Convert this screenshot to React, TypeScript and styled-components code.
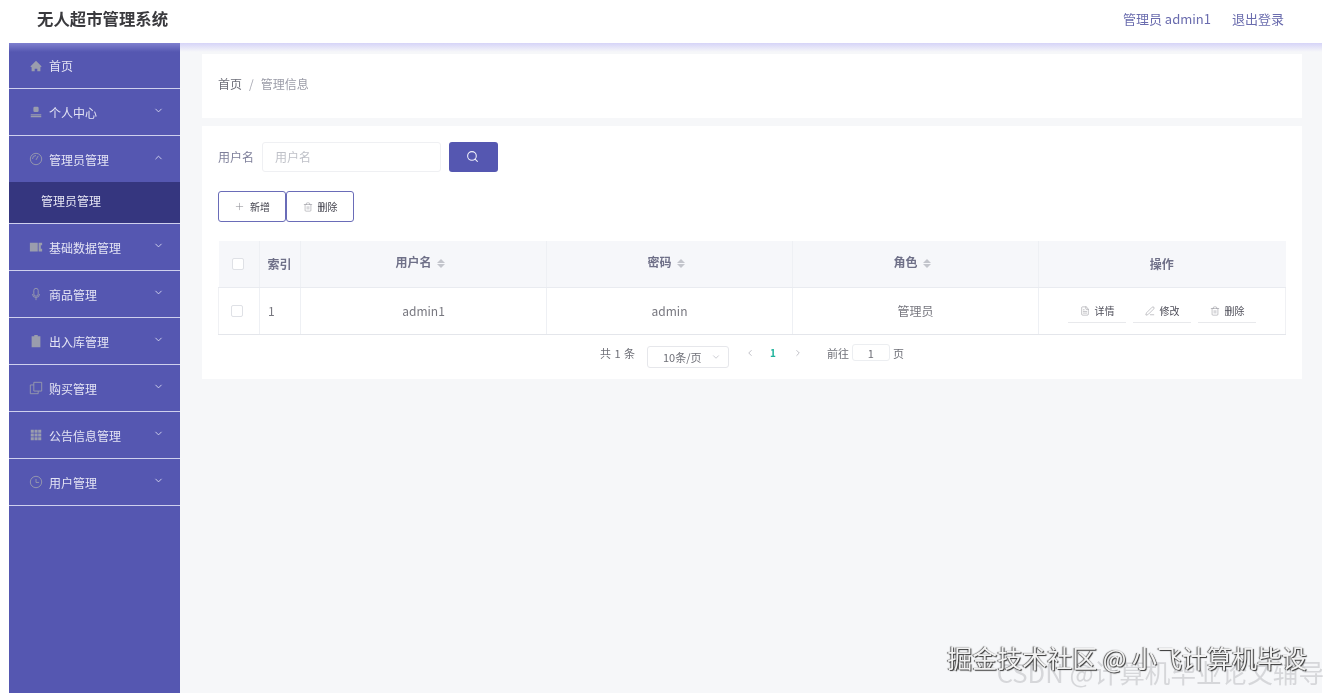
import React from 'react'
import styled, { createGlobalStyle } from 'styled-components'
import { ChevronDown, ChevronUp, ChevronLeft, ChevronRight, Search, Plus, Trash2, PenLine, FileText } from 'lucide-react'

const FONT = `"Noto Sans CJK SC", "Noto Sans", sans-serif`

const GlobalStyle = createGlobalStyle`
  html, body {
    margin: 0;
    padding: 0;
    background: #fff;
    font-family: ${FONT};
    overflow: hidden;
  }
  * {
    box-sizing: border-box;
  }
`

const Page = styled.div`
  position: relative;
  width: 1327px;
  height: 693px;
  overflow: hidden;
  padding: 0 5px 0 9px;
  display: flex;
  flex-direction: column;
  background: #fff;
  filter: blur(0.35px);
`

const Header = styled.header`
  height: 43px;
  flex: none;
  display: flex;
  align-items: center;
  justify-content: space-between;
  padding: 0 38px 7px 28px;
`

const Title = styled.div`
  font-size: 16.4px;
  font-weight: 700;
  color: #3a3a3e;
`

const UserLinks = styled.div`
  display: flex;
  gap: 21px;
  font-size: 13px;
  color: #6a6cae;
`

const Body = styled.div`
  flex: 1;
  display: flex;
  min-height: 0;
`

const Sidebar = styled.nav`
  width: 171px;
  flex: none;
  background: linear-gradient(#7f80cf 0, #5557b1 9px);
  background-color: #5557b1;
`

const MenuRow = styled.div<{ $first?: boolean; $open?: boolean }>`
  height: ${({ $first, $open }) => ($first || $open ? 46 : 47)}px;
  display: flex;
  align-items: center;
  padding: 0 16px 0 20px;
  border-bottom: ${({ $open }) => ($open ? '0' : '1px solid #cfd0ee')};
  font-size: 12px;
  color: #e4e4f4;
`

const MenuIcon = styled.svg`
  width: 14px;
  height: 14px;
  flex: none;
  margin-right: 6px;
  color: #9a9dad;
`

const MenuLabel = styled.span`
  flex: 1;
`

const Chevron = styled.span`
  display: flex;
  margin: -4px 0 0;
  color: #d5d6ef;
`

const SubRow = styled.div`
  height: 42px;
  display: flex;
  align-items: center;
  padding: 0 0 4px 32px;
  background: #35367f;
  border-bottom: 1px solid #cfd0ee;
  font-size: 12px;
  color: #e6e6f4;
`

const Main = styled.main`
  flex: 1;
  min-width: 0;
  padding: 11px 20px 0 22px;
  display: flex;
  flex-direction: column;
  gap: 8px;
  background: linear-gradient(#d6d4f8 0, #f6f7f9 9px);
  background-color: #f6f7f9;
`

const Card = styled.section`
  background: #fff;
`

const Crumbs = styled(Card)`
  height: 64px;
  display: flex;
  align-items: center;
  padding: 0 16px 5px;
  font-size: 12px;
  color: #9b9ca8;
`

const CrumbHome = styled.span`
  color: #6d6e78;
`

const CrumbSep = styled.span`
  margin: 0 7px;
  color: #a8a9b3;
`

const ListCard = styled(Card)`
  height: 253px;
  padding: 16px 16px 0;
`

const SearchRow = styled.div`
  display: flex;
  align-items: center;
`

const FieldLabel = styled.label`
  width: 44px;
  padding-bottom: 2px;
  font-size: 12px;
  color: #7e7f9a;
`

const TextInput = styled.div`
  width: 179px;
  height: 30px;
  display: flex;
  align-items: center;
  padding: 0 0 2px 12px;
  border: 1px solid #eff0f3;
  border-radius: 3px;
  font-size: 12px;
  color: #bfc1c8;
`

const SearchButton = styled.button`
  width: 49px;
  height: 30px;
  margin-left: 8px;
  padding: 0 3px 2px 0;
  display: flex;
  align-items: center;
  justify-content: center;
  border: 0;
  border-radius: 3px;
  background: #5557b1;
  color: #f0f0fa;
`

const ActionRow = styled.div`
  display: flex;
  margin-top: 19px;
`

const OutlineButton = styled.button`
  width: 68px;
  height: 31px;
  padding: 0;
  display: flex;
  align-items: center;
  justify-content: center;
  gap: 5px;
  border: 1px solid #6a6cb8;
  border-radius: 3px;
  background: #fff;
  font-family: ${FONT};
  font-size: 10px;
  color: #3f3f4a;

  svg {
    color: #8b8b92;
  }
`

const Table = styled.table`
  width: 1068px;
  margin-top: 19px;
  border-collapse: collapse;
  table-layout: fixed;
  font-size: 12px;
`

const HeadCell = styled.th<{ $w?: number; $sortable?: boolean }>`
  width: ${({ $w }) => ($w ? `${$w}px` : 'auto')};
  height: 46px;
  padding: ${({ $sortable }) => ($sortable ? '0 7px 4px 0' : '0 1px 1px 0')};
  background: #f6f7fa;
  border-right: 1px solid #eef0f4;
  border-bottom: 1px solid #e9ebf0;
  font-weight: 700;
  font-size: 12px;
  color: #6f7088;
  text-align: center;

  &:last-child {
    border-right: 0;
  }
`

const Cell = styled.td`
  height: 47px;
  padding: 0 0 1px;
  border-right: 1px solid #eef0f4;
  border-bottom: 1px solid #e4e6eb;
  text-align: center;
  color: #77777f;

  &:first-child {
    border-left: 1px solid #f0f1f4;
  }

  &:last-child {
    border-right: 1px solid #f0f1f4;
  }
`

const IndexCell = styled(Cell)`
  text-align: left;
  padding-left: 8px;
`

const Check = styled.span<{ $row?: boolean }>`
  display: inline-block;
  width: 12px;
  height: 12px;
  margin: ${({ $row }) => ($row ? '-2px 5px 0 0' : '-2px 1px 0 0')};
  vertical-align: middle;
  border: 1px solid #dfe1e6;
  border-radius: 2px;
  background: #fff;
`

const Sort = styled.span`
  display: inline-flex;
  flex-direction: column;
  gap: 1px;
  margin-left: 5px;
  vertical-align: middle;

  &::before,
  &::after {
    content: '';
    width: 0;
    height: 0;
    border-left: 4px solid transparent;
    border-right: 4px solid transparent;
  }

  &::before {
    border-bottom: 4px solid #c3c5cc;
  }

  &::after {
    border-top: 4px solid #c3c5cc;
  }
`

const RowActions = styled.div`
  display: flex;
  justify-content: center;
  gap: 7px;
  padding-top: 2px;
`

const RowAction = styled.span`
  width: 58px;
  height: 24px;
  display: flex;
  align-items: center;
  justify-content: center;
  gap: 5px;
  border-bottom: 1px solid #e8e9ec;
  font-size: 10px;
  color: #4f4f5a;

  svg {
    color: #8a8a92;
  }
`

const Pager = styled.div`
  display: flex;
  align-items: center;
  height: 36px;
  padding-left: 382px;
  font-size: 11px;
  color: #6f7078;
`

const Total = styled.span`
  width: 34px;
  white-space: nowrap;
  word-spacing: 1px;
`

const PageSize = styled.div`
  width: 82px;
  height: 22px;
  margin: 8px 16px 0 13px;
  padding: 0 7px 0 15px;
  display: flex;
  align-items: center;
  justify-content: space-between;
  border: 1px solid #e6e7eb;
  border-radius: 3px;
`

const PageNumber = styled.span`
  margin: 0 17px 0 15px;
  font-weight: 700;
  font-size: 10px;
  color: #1fb39c;
`

const Arrow = styled.span`
  display: flex;
  color: #b4b5bd;
`

const Goto = styled.span`
  margin-left: 24px;
`

const GotoBox = styled.span`
  width: 38px;
  height: 17px;
  margin: 0 3px 0 3px;
  display: flex;
  align-items: center;
  justify-content: center;
  border: 1px solid #eceef1;
  border-radius: 3px;
  font-size: 11px;
`

const Watermark = styled.div`
  position: absolute;
  right: 20px;
  bottom: 23px;
  font-size: 25px;
  line-height: 1;
  color: #f2f2f2;
  white-space: nowrap;
  text-shadow: 1px 1px 1px #333, -1px 0 1px #555;
`

const WatermarkBack = styled.div`
  position: absolute;
  right: 3px;
  bottom: 8px;
  font-size: 25.6px;
  line-height: 1;
  color: #d6d7da;
  white-space: nowrap;
`

type IconProps = { d: string; fill?: boolean }

const Glyph: React.FC<IconProps> = ({ d, fill }) => (
  <MenuIcon
    viewBox='0 0 16 16'
    fill={fill ? 'currentColor' : 'none'}
    stroke={fill ? 'none' : 'currentColor'}
    strokeWidth={1}
  >
    <path d={d} />
  </MenuIcon>
)

const menu: { label: string; d: string; fill?: boolean; open?: boolean; plain?: boolean }[] = [
  { label: '首页', d: 'M8 2L1.5 8.5 3 9.5V14h3.5v-3h3v3H13V9.5l1.5-1z', fill: true, plain: true },
  { label: '个人中心', d: 'M6.5 2h3A1.5 1.5 0 0 1 11 3.5v3A1.5 1.5 0 0 1 9.5 8h-3A1.5 1.5 0 0 1 5 6.5v-3A1.5 1.5 0 0 1 6.5 2zM2 10.5h12V12H2zM2 12.5h12V14H2z', fill: true },
  {
    label: '管理员管理',
    d: 'M8 1.5a6.5 6.5 0 1 1 0 13 6.5 6.5 0 0 1 0-13zM8 9l2.5-4.5M4 8a4 4 0 0 1 4-4',
    open: true,
  },
  { label: '基础数据管理', d: 'M1 3h9v10H1zM11 3h4v3h-1.5v4H15v3h-4z', fill: true },
  { label: '商品管理', d: 'M8 1.5a2.5 2.5 0 0 1 2.5 2.5v4a2.5 2.5 0 0 1-5 0V4A2.5 2.5 0 0 1 8 1.5zM4 8a4 4 0 0 0 8 0M8 12v3' },
  { label: '出入库管理', d: 'M6 1h4v1.5h3V15H3V2.5h3z', fill: true },
  { label: '购买管理', d: 'M5.5 1.5h9v10h-9zM5.5 4.5h-4v10h9v-3' },
  { label: '公告信息管理', d: 'M2 2h3.5v3.5H2zM6.3 2h3.5v3.5H6.3zM10.5 2H14v3.5h-3.5zM2 6.3h3.5v3.5H2zM6.3 6.3h3.5v3.5H6.3zM10.5 6.3H14v3.5h-3.5zM2 10.5h3.5V14H2zM6.3 10.5h3.5V14H6.3zM10.5 10.5H14V14h-3.5z', fill: true },
  { label: '用户管理', d: 'M8 1.5a6.5 6.5 0 1 1 0 13 6.5 6.5 0 0 1 0-13zM8 4.5V8.5h3.5' },
]

const App: React.FC = () => (
  <Page>
    <GlobalStyle />
    <Header>
      <Title>无人超市管理系统</Title>
      <UserLinks>
        <span>管理员 admin1</span>
        <span>退出登录</span>
      </UserLinks>
    </Header>
    <Body>
      <Sidebar>
        {menu.map((item, i) => (
          <React.Fragment key={item.label}>
            <MenuRow $first={i === 0} $open={item.open}>
              <Glyph d={item.d} fill={item.fill} />
              <MenuLabel>{item.label}</MenuLabel>
              {!item.plain && (
                <Chevron>{item.open ? <ChevronUp size={11} /> : <ChevronDown size={11} />}</Chevron>
              )}
            </MenuRow>
            {item.open && <SubRow>管理员管理</SubRow>}
          </React.Fragment>
        ))}
      </Sidebar>
      <Main>
        <Crumbs>
          <CrumbHome>首页</CrumbHome>
          <CrumbSep>/</CrumbSep>
          管理信息
        </Crumbs>
        <ListCard>
          <SearchRow>
            <FieldLabel>用户名</FieldLabel>
            <TextInput>用户名</TextInput>
            <SearchButton aria-label='搜索'>
              <Search size={13} />
            </SearchButton>
          </SearchRow>
          <ActionRow>
            <OutlineButton>
              <Plus size={11} strokeWidth={1.2} />
              新增
            </OutlineButton>
            <OutlineButton>
              <Trash2 size={10} strokeWidth={1.2} />
              删除
            </OutlineButton>
          </ActionRow>
          <Table>
            <thead>
              <tr>
                <HeadCell $w={41}>
                  <Check />
                </HeadCell>
                <HeadCell $w={41}>索引</HeadCell>
                <HeadCell $w={246} $sortable>
                  用户名
                  <Sort />
                </HeadCell>
                <HeadCell $w={246} $sortable>
                  密码
                  <Sort />
                </HeadCell>
                <HeadCell $w={246} $sortable>
                  角色
                  <Sort />
                </HeadCell>
                <HeadCell>操作</HeadCell>
              </tr>
            </thead>
            <tbody>
              <tr>
                <Cell>
                  <Check $row />
                </Cell>
                <IndexCell>1</IndexCell>
                <Cell>admin1</Cell>
                <Cell>admin</Cell>
                <Cell>管理员</Cell>
                <Cell>
                  <RowActions>
                    <RowAction>
                      <FileText size={10} strokeWidth={1.2} />
                      详情
                    </RowAction>
                    <RowAction>
                      <PenLine size={10} strokeWidth={1.2} />
                      修改
                    </RowAction>
                    <RowAction>
                      <Trash2 size={10} strokeWidth={1.2} />
                      删除
                    </RowAction>
                  </RowActions>
                </Cell>
              </tr>
            </tbody>
          </Table>
          <Pager>
            <Total>共 1 条</Total>
            <PageSize>
              10条/页
              <ChevronDown size={10} color='#c3c4cb' />
            </PageSize>
            <Arrow>
              <ChevronLeft size={10} />
            </Arrow>
            <PageNumber>1</PageNumber>
            <Arrow>
              <ChevronRight size={10} />
            </Arrow>
            <Goto>前往</Goto>
            <GotoBox>1</GotoBox>
            页
          </Pager>
        </ListCard>
      </Main>
    </Body>
    <WatermarkBack>CSDN @计算机毕业论文辅导</WatermarkBack>
    <Watermark>掘金技术社区 @ 小飞计算机毕设</Watermark>
  </Page>
)

export default App
